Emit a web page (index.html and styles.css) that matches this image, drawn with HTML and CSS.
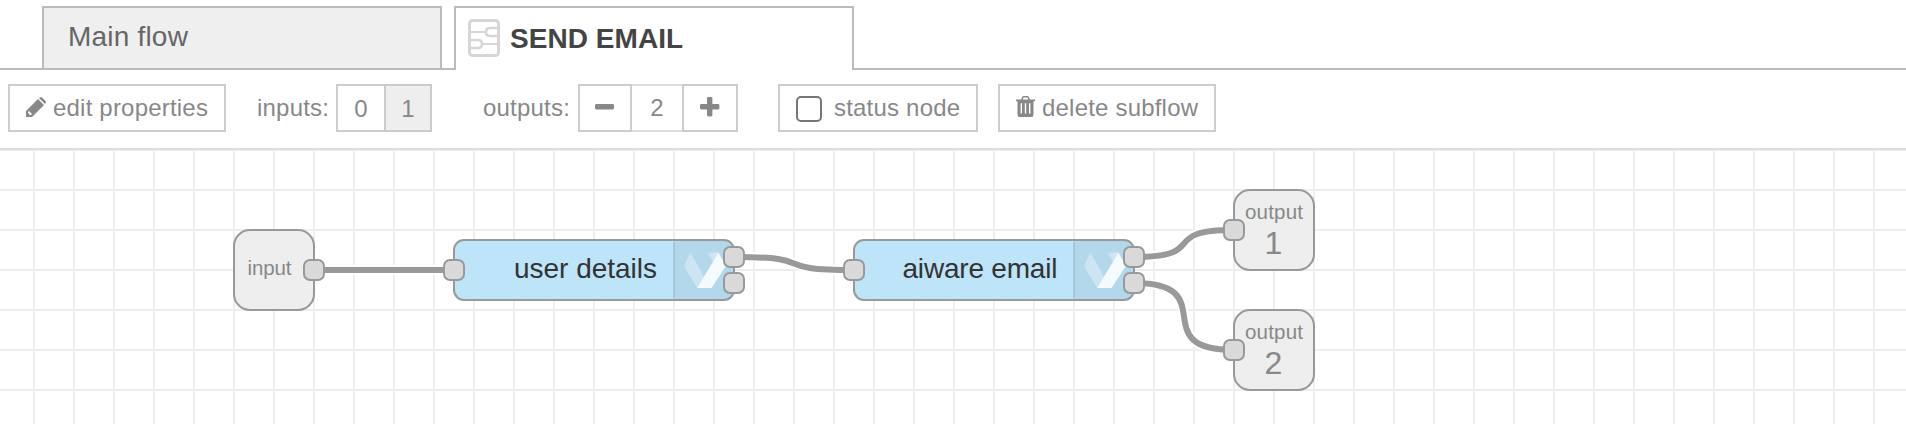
FILE: index.html
```
<!DOCTYPE html>
<html lang="en">
<head>
<meta charset="utf-8">
<title>Subflow editor</title>
<link rel="stylesheet" href="styles.css">
</head>
<body>
<nav class="tabs">
  <div class="tab"><span class="tab-name">Main flow</span></div>
  <div class="tab active">
    <svg class="subflow-icon" width="32" height="38" viewBox="0 0 32 38">
      <rect x="1.5" y="1.5" width="29" height="35" rx="3" stroke-width="3"/>
      <path d="M2 13H17M30 25H15" stroke-width="2"/>
      <path d="M30 9H22Q18 9 18 13T22 17H30M2 21H10Q14 21 14 25T10 29H2" stroke-width="2.6"/>
    </svg>
    <span class="tab-name">SEND EMAIL</span>
  </div>
  <div class="tab-rest"></div>
</nav>
<div class="toolbar">
  <button class="btn edit">
    <svg class="pencil" width="20" height="20" viewBox="0 0 20 20"><path d="M0 20V14L12 2L18 8L6 20ZM2 15V16.5H3.5V18H5L6 17L3 14ZM13 1L14 .4Q15 -.4 16 .5L19.5 4Q20.4 5 19.6 6L19 7Z" fill-rule="evenodd"/></svg>
    <span>edit properties</span>
  </button>
  <span class="label inputs">inputs:</span>
  <div class="group"><button class="btn zero">0</button><button class="btn one">1</button></div>
  <span class="label outputs">outputs:</span>
  <div class="group">
    <button class="btn minus"><svg width="20" height="20" viewBox="0 0 20 20"><rect x="0" y="7" width="19" height="5.4" rx="1.4"/></svg></button>
    <span class="count">2</span>
    <button class="btn plus"><svg width="20" height="20" viewBox="0 0 20 20"><rect x="0" y="7" width="19.4" height="5.4" rx="1.4"/><rect x="7" y="0" width="5.4" height="19.4" rx="1.4"/></svg></button>
  </div>
  <button class="btn status"><span class="checkbox"></span><span>status node</span></button>
  <button class="btn delete">
    <svg width="19" height="22" viewBox="0 0 19 22"><path d="M0 3.5H5L6.2 1Q6.6 0 7.6 0H11.4Q12.4 0 12.8 1L14 3.5H19V5.2H17.5V18.5Q17.5 21 15.5 21H3.5Q1.5 21 1.5 18.5V5.2H0ZM6.7 3.5H12.3L11.5 1.6H7.5ZM4.6 7.2V17.6H6V7.2ZM8.8 7.2V17.6H10.2V7.2ZM13 7.2V17.6H14.4V7.2Z" fill-rule="evenodd"/></svg>
    <span>delete subflow</span>
  </button>
</div>
<main class="workspace">
  <svg class="canvas" width="1906" height="274" viewBox="0 150 1906 274">
    <defs>
      <pattern id="grid" x="33" y="149" width="40" height="40" patternUnits="userSpaceOnUse"><path class="grid-line" d="M0 0H40V2H2V40H0Z"/></pattern>
      <linearGradient id="fold" x1="0" x2="1" y1="0" y2="0"><stop class="fold-start" offset="0"/><stop class="fold-end" offset="1"/></linearGradient>
      <g id="port"><rect class="port" x="-10" y="-10" width="20" height="20" rx="6"/></g>
      <g id="function-node">
        <rect class="node-fill" width="280" height="60" rx="10"/>
        <path class="icon-shade" d="M220 0H270Q280 0 280 10V50Q280 60 270 60H220Z"/>
        <path class="icon-divider" d="M220 2V58"/>
        <path class="mark-left" d="M230 26L236.5 12.500L250 37L243 47.500Z"/>
        <path class="mark-fold" fill="url(#fold)" d="M253 12.500H265L259 22Z"/>
        <path class="mark-right" d="M264.500 13L272 26L257.500 48H243Z"/>
        <rect class="node-border" width="280" height="60" rx="10"/>
      </g>
      <g id="wires">
        <path d="M314 270H454"/>
        <path d="M734 257C824.500 257 763.500 270 854 270"/>
        <path d="M1134 257C1211.700 257 1156.300 230 1234 230"/>
        <path d="M1134 283C1224.300 283 1143.700 350 1234 350"/>
      </g>
    </defs>
    <rect y="150" width="1906" height="274" fill="url(#grid)"/>
    <use href="#wires" class="wire-outline"/>
    <use href="#wires" class="wire"/>
    <rect class="io-node" x="234" y="230" width="80" height="80" rx="16"/>
    <text class="io-label" x="269.500" y="275" textLength="44">input</text>
    <use href="#port" x="314" y="270"/>
    <use href="#function-node" x="454" y="240"/>
    <text class="node-label" x="585.500" y="278" textLength="143">user details</text>
    <use href="#port" x="454" y="270"/><use href="#port" x="734" y="257"/><use href="#port" x="734" y="283"/>
    <use href="#function-node" x="854" y="240"/>
    <text class="node-label" x="980" y="278" textLength="155">aiware email</text>
    <use href="#port" x="854" y="270"/><use href="#port" x="1134" y="257"/><use href="#port" x="1134" y="283"/>
    <rect class="io-node" x="1234" y="190" width="80" height="80" rx="16"/>
    <text class="io-label" x="1274" y="219" textLength="58">output</text><text class="io-number" x="1273.500" y="254">1</text>
    <use href="#port" x="1234" y="230"/>
    <rect class="io-node" x="1234" y="310" width="80" height="80" rx="16"/>
    <text class="io-label" x="1274" y="339" textLength="58">output</text><text class="io-number" x="1273.500" y="374">2</text>
    <use href="#port" x="1234" y="350"/>
  </svg>
</main>
</body>
</html>
```
FILE: styles.css
```
* { box-sizing: border-box; }
body { margin: 0; width: 1906px; height: 424px; overflow: hidden; background: #fff; color: #888; font-family: "Liberation Sans", Arial, sans-serif; }
.tabs { display: flex; height: 70px; padding-top: 6px; background: linear-gradient(#bbb, #bbb) 0 68px / 454px 2px no-repeat; }
.tab { width: 400px; height: 64px; margin-left: 42px; padding-left: 24px; border: 2px solid #bbb; background: #efefef; color: #666; display: flex; font-size: 28px; line-height: 57px; letter-spacing: .2px; white-space: nowrap; }
.tab.active { margin-left: 12px; padding-left: 12px; border-bottom: 0; background: #fff; color: #444; font-weight: bold; line-height: 61px; letter-spacing: .05px; }
.tab-rest { flex: 1; border-bottom: 2px solid #bbb; }
.subflow-icon { margin: 11px 10px 0 0; fill: none; stroke: #d6d6d6; }
.toolbar { height: 80px; padding: 14px 0 0 8px; display: flex; align-items: flex-start; border-bottom: 2px solid #ddd; font-size: 24px; letter-spacing: .2px; white-space: nowrap; }
.btn { display: flex; align-items: center; height: 48px; padding: 0 0 2px; border: 2px solid #ccc; border-radius: 0; background: #fff; color: #888; font: inherit; letter-spacing: inherit; white-space: nowrap; }
.btn span { padding-top: 2px; }
.btn svg { fill: #888; flex: none; }
.edit { width: 218px; padding-left: 16px; gap: 7px; }
.label { line-height: 48px; }
.inputs { width: 110px; padding-left: 31px; }
.outputs { width: 146px; padding-left: 51px; }
.group { display: flex; }
.zero, .one { justify-content: center; padding: 1px 0 0; }
.zero { width: 50px; }
.one { width: 48px; margin-left: -2px; background: #eee; }
.minus { width: 54px; justify-content: center; }
.count { width: 50px; height: 48px; border: solid #ddd; border-width: 2px 0; line-height: 44px; text-align: center; }
.plus { width: 56px; justify-content: center; }
.status { width: 200px; margin-left: 40px; padding-left: 16px; gap: 12px; }
.checkbox { width: 26px; height: 26px; margin-top: 4px; border: 2px solid #767676; border-radius: 5px; }
.delete { width: 218px; margin-left: 20px; padding-left: 16px; gap: 7px; }
.canvas { display: block; }
.grid-line { fill: #eee; }
.wire, .wire-outline { fill: none; stroke: #999; stroke-width: 6px; }
.wire-outline { stroke: #fff; stroke-width: 10px; }
.io-node { fill: #eee; stroke: #999; stroke-width: 2px; }
.port { fill: #d9d9d9; stroke: #999; stroke-width: 2px; }
.node-fill { fill: #bde4f9; }
.node-border { fill: none; stroke: #999; stroke-width: 2px; }
.icon-shade { fill: #000; fill-opacity: .05; }
.icon-divider { stroke: #000; stroke-opacity: .1; stroke-width: 2px; }
.mark-left { fill: #cde4f2; }
.fold-start { stop-color: #bfdcee; }
.fold-end { stop-color: #dcedf7; }
.mark-right { fill: #f5fafe; }
.io-label { fill: #888; font-size: 20.5px; text-anchor: middle; }
.io-number { fill: #888; font-size: 32px; text-anchor: middle; }
.node-label { fill: #333; font-size: 28px; text-anchor: middle; }
```
